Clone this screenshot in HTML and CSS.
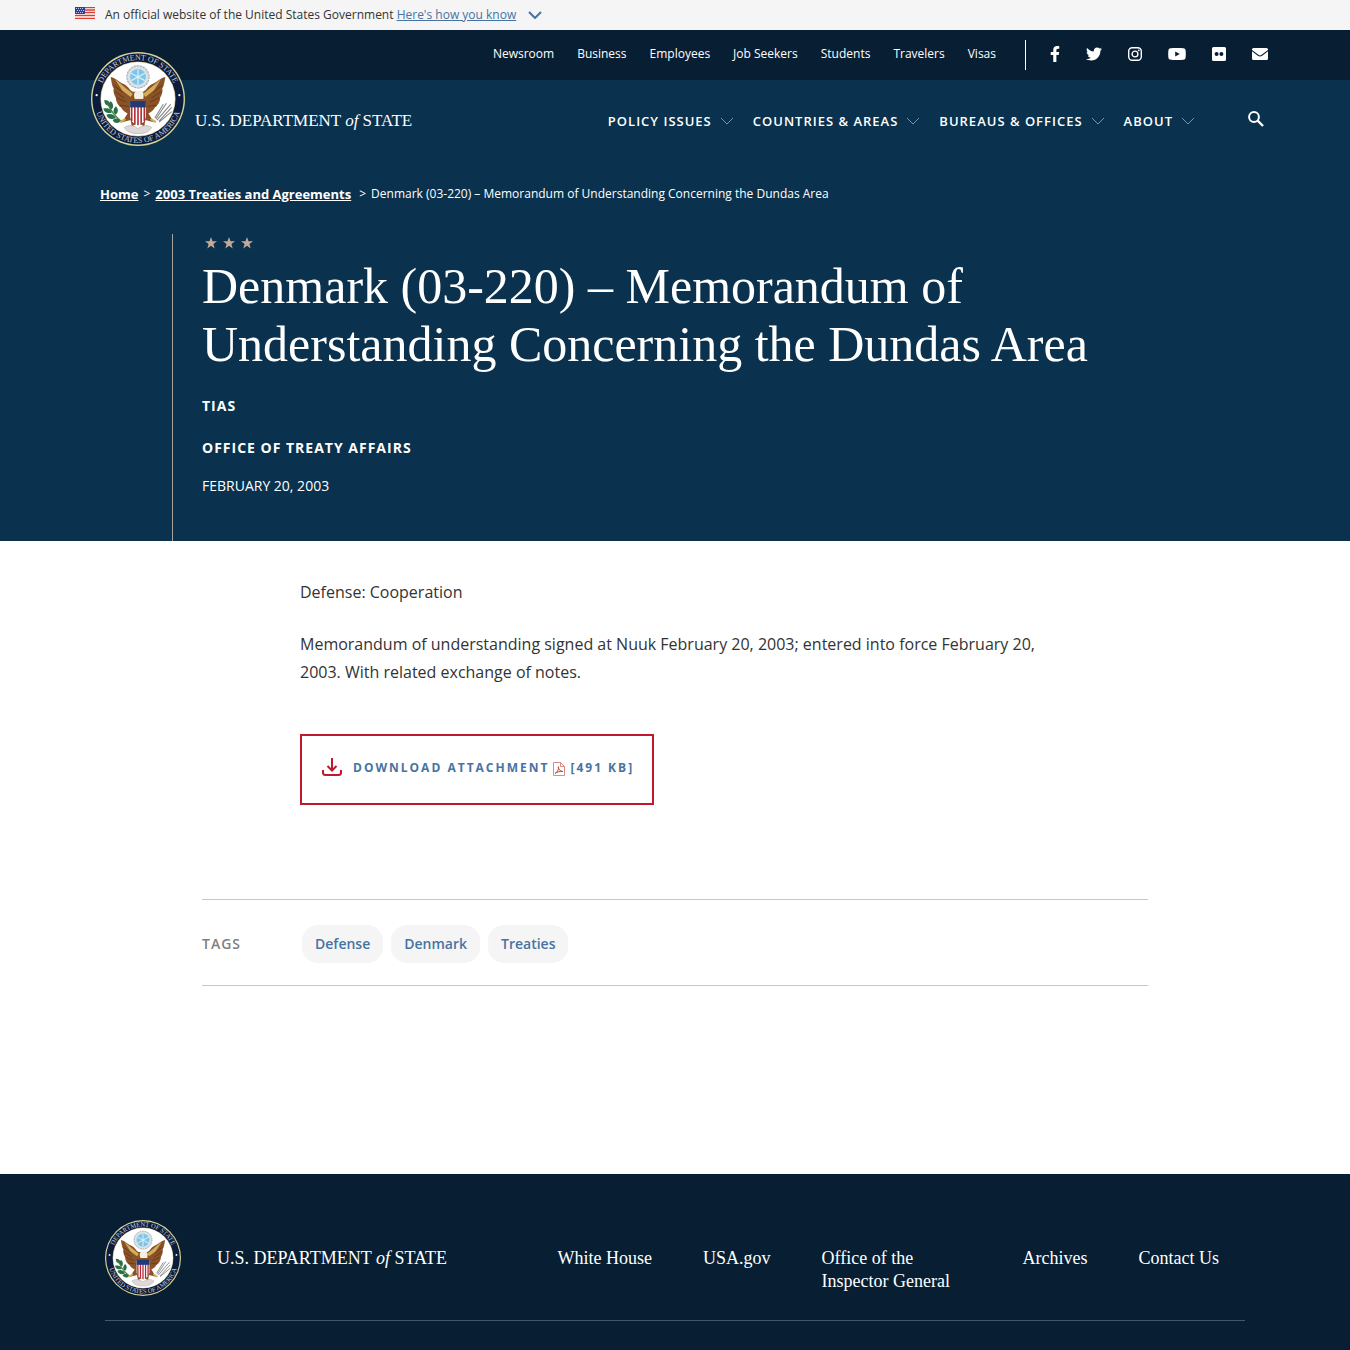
FILE: index.html
```html
<!DOCTYPE html>
<html lang="en">
<head>
<meta charset="utf-8">
<meta name="viewport" content="width=device-width, initial-scale=1">
<title>Denmark (03-220) – Memorandum of Understanding Concerning the Dundas Area</title>
<link rel="stylesheet" href="styles.css">
</head>
<body>
<svg class="defs" width="0" height="0" aria-hidden="true">
  <defs>
    <path id="arc-top" d="M8.900 55A41.400 41.400 0 1 1 91.100 55"/>
    <path id="arc-bottom" d="M3.500 47A46.600 46.600 0 1 0 96.500 47"/>
    <symbol id="chevron" viewBox="0 0 14 8"><path d="M1 1l6 6 6-6" fill="none" stroke="currentColor"/></symbol>
    <symbol id="star" viewBox="0 0 12 12"><path d="M6 0l1.500 4.200H12L8.400 6.900 9.700 11.500 6 8.800 2.300 11.500 3.600 6.900 0 4.200h4.500z" fill="currentColor"/></symbol>
    <symbol id="seal" viewBox="0 0 100 100">
      <circle cx="50" cy="50" r="50" fill="#d9d39a"/>
      <circle cx="50" cy="50" r="48.500" fill="#0c1c3c"/>
      <circle cx="50" cy="50" r="40" fill="#b9a869"/>
      <circle cx="50" cy="50" r="39.400" fill="#fff"/>
      <g fill="#c9cbd6" font-family="Liberation Serif, serif" font-size="8.500">
        <text text-anchor="middle"><textPath href="#arc-top" startOffset="50%">DEPARTMENT OF STATE</textPath></text>
        <text text-anchor="middle"><textPath href="#arc-bottom" startOffset="50%">UNITED STATES OF AMERICA</textPath></text>
      </g>
      <circle cx="6" cy="46" r="1.200" fill="#fff"/><circle cx="94" cy="46" r="1.200" fill="#fff"/>
      <g transform="translate(-6 -6) scale(1.120)">
        <g fill="#8a5227">
          <path d="M45 43c-3-1-4-5-8-7-5-2-8-6-13-7 1 5 1 8 3 11-1 3 1 7 2 9 0 4 3 8 5 9 2 4 6 6 9 6l2 4h10l2-4c3 0 7-2 9-6 2-1 5-5 5-9 1-2 3-6 2-9 2-3 2-6 3-11-5 1-8 5-13 7-4 2-5 6-8 7z"/>
          <path d="M41 62l-6 10 8-2 1 6 6-3 6 3 1-6 8 2-6-10z"/>
        </g>
        <g fill="none" stroke="#5f3318" stroke-width=".8">
          <path d="M27 37l9 7M28 43l9 6M30 49l9 4M33 56l8 1M73 37l-9 7M72 43l-9 6M70 49l-9 4M67 56l-8 1"/>
        </g>
        <path d="M28 31l12 10 5 4-2 3-8-6zM72 31L60 41l-5 4 2 3 8-6z" fill="#d3ad5c"/>
        <path d="M47 50c-2-5 0-9 5-8 3 0 4 3 3 8z" fill="#f4efe2"/>
        <circle cx="50" cy="29" r="11" fill="#d9e2e5"/>
        <circle cx="50" cy="29" r="10.500" fill="none" stroke="#a5afaa" stroke-dasharray="2 1"/>
        <circle cx="50" cy="29" r="7.500" fill="#7fc4e8"/>
        <path d="M50 22v14M43.500 25.500l13 7M43.500 32.500l13-7" stroke="#d6f0fa" stroke-width="1.200"/>
        <path d="M42.500 53h15v14q-1 6-7.500 8-6.500-2-7.500-8z" fill="#fff"/>
        <path d="M44 57v14M47 57v17M50 57v18M53 57v17M56 57v14" stroke="#b32836" stroke-width="1.500"/>
        <path d="M42.500 52h15v6h-15z" fill="#203a79"/>
        <g fill="#27704a">
          <path d="M18 51c5 0 6 3 5 6-4-1-5-3-5-6zM24 52c3 3 3 6 1 8-3-2-3-5-1-8zM17 59c5-1 8 1 8 4-4 1-7 0-8-4zM20 65c4-2 8 0 9 3-4 2-8 1-9-3zM29 57c3 3 2 6 0 8-3-2-3-5 0-8zM26 70c4-3 7-1 8 1-3 3-7 2-8-1z"/>
          <path d="M21 54q4 10 14 18" fill="none" stroke="#4e7a3d" stroke-width="1.200"/>
        </g>
        <path d="M67 69l10-15M68 70l13-15M70 71l12-13M66 68l8-13M70 72l12-10" stroke="#898b8c" stroke-width="1.100"/>
        <path d="M33 72l5-3M67 72l-5-3" stroke="#d3ad5c" stroke-width="2"/>
        <path d="M37 77q6-4 13 1 7-5 13-1-3 6-13 6t-13-6z" fill="#ded8d8" stroke="#b5acae" stroke-width=".6"/>
      </g>
    </symbol>
  </defs>
</svg>

<div class="banner">
  <div class="banner-inner">
    <svg class="flag" viewBox="0 0 20 12" aria-hidden="true">
      <path fill="#fff" d="M0 0h20v12H0z"/>
      <path d="M0 .500h20M0 3h20M0 5.500h20M0 8.500h20M0 11.300h20" stroke="#dc3d30" stroke-width="1.300"/>
      <path fill="#2e3f9c" d="M0 0h10v7H0z"/>
      <path d="M1 1.500h8M2 3.500h8M1 5.500h8" stroke="#b8c4ee" stroke-dasharray="1 1"/>
    </svg>
    <span class="banner-text">An official website of the United States Government <a href="#">Here's how you know</a></span>
    <svg class="banner-chevron" aria-hidden="true"><use href="#chevron"/></svg>
  </div>
</div>

<header class="header">
  <a class="brand" href="#">
    <svg class="seal" role="img" aria-label="Department of State seal"><use href="#seal"/></svg>
    <span class="wordmark">U.S. DEPARTMENT <em>of</em> STATE</span>
  </a>
  <div class="menus">
    <div class="utility">
      <nav class="utility-links" aria-label="Audiences">
        <a href="#">Newsroom</a><a href="#">Business</a><a href="#">Employees</a><a href="#">Job Seekers</a><a href="#">Students</a><a href="#">Travelers</a><a href="#">Visas</a>
      </nav>
      <div class="social">
        <a href="#" aria-label="Facebook"><svg width="10" height="16" viewBox="0 0 320 512"><path d="M279 288l14-93h-89v-60c0-25 13-50 53-50h40V7s-37-7-72-7c-73 0-121 44-121 125v70H23v93h81v224h100V288z"/></svg></a>
        <a href="#" aria-label="Twitter"><svg width="16" height="16" viewBox="0 0 512 512"><path d="M459 152c1 4 1 9 1 13 0 139-106 299-299 299-59 0-115-17-161-47 8 1 16 1 25 1 49 0 94-16 130-45-46-1-84-31-98-73 7 1 13 2 20 2 9 0 19-1 28-4-48-10-84-52-84-103v-1c14 8 30 13 47 13-28-19-47-51-47-87 0-19 5-37 14-53 52 64 130 106 217 110-2-8-3-16-3-24 0-58 47-105 105-105 30 0 58 13 77 33 24-5 46-13 66-25-8 24-24 45-46 58 21-2 42-8 60-16-14 21-32 39-52 54z"/></svg></a>
        <a href="#" aria-label="Instagram"><svg width="14" height="14" viewBox="0 0 14 14"><rect x=".7" y=".7" width="12.600" height="12.600" rx="3.500" fill="none" stroke="#fff" stroke-width="1.400"/><circle cx="7" cy="7" r="2.900" fill="none" stroke="#fff" stroke-width="1.400"/><circle cx="10.800" cy="3.300" r=".9"/></svg></a>
        <a href="#" aria-label="YouTube"><svg width="18" height="12" viewBox="0 0 18 12"><path fill-rule="evenodd" d="M9 0c7 0 8 .1 8.500 2 .4 2 .4 6 0 8-.5 1.900-1.500 2-8.500 2S1 11.900.500 10C.1 8 .1 4 .500 2 1 .1 2 0 9 0zM7.200 3.400v5.200L11.800 6z"/></svg></a>
        <a href="#" aria-label="Flickr"><svg width="14" height="14" viewBox="0 0 14 14"><path fill-rule="evenodd" d="M1.500 0h11A1.500 1.500 0 0 1 14 1.500v11a1.500 1.500 0 0 1-1.500 1.500h-11A1.500 1.500 0 0 1 0 12.500v-11A1.500 1.500 0 0 1 1.500 0zM2.600 7a2 2 0 1 0 4 0 2 2 0 1 0-4 0M7.400 7a2 2 0 1 0 4 0 2 2 0 1 0-4 0"/></svg></a>
        <a href="#" aria-label="Email"><svg width="16" height="12" viewBox="0 0 16 12"><path d="M1.500 0h13Q16 0 16 1.500v.4L9.600 6.800Q8 8 6.400 6.800L0 1.900v-.4Q0 0 1.500 0zM0 3.300l5.800 4.500q2.200 1.600 4.400 0L16 3.300v7.200q0 1.500-1.500 1.500h-13Q0 12 0 10.500z"/></svg></a>
      </div>
    </div>
    <nav class="primary" aria-label="Main">
      <button type="button">POLICY ISSUES<svg class="chevron" aria-hidden="true"><use href="#chevron"/></svg></button>
      <button type="button">COUNTRIES &amp; AREAS<svg class="chevron" aria-hidden="true"><use href="#chevron"/></svg></button>
      <button type="button">BUREAUS &amp; OFFICES<svg class="chevron" aria-hidden="true"><use href="#chevron"/></svg></button>
      <button type="button">ABOUT<svg class="chevron" aria-hidden="true"><use href="#chevron"/></svg></button>
      <button type="button" class="search" aria-label="Search"><svg width="16" height="16" viewBox="0 0 16 16"><circle cx="6" cy="6" r="4.900" fill="none" stroke="#fff" stroke-width="2"/><path d="M9.500 9.500l5.500 5.500" stroke="#fff" stroke-width="2.400"/></svg></button>
    </nav>
  </div>
</header>

<main>
  <section class="hero">
    <nav class="breadcrumbs" aria-label="Breadcrumb">
      <a href="#">Home</a><span>&gt;</span><a href="#">2003 Treaties and Agreements</a><span class="last-separator">&gt;</span><span>Denmark (03-220) – Memorandum of Understanding Concerning the Dundas Area</span>
    </nav>
    <div class="hero-body">
      <div class="stars" aria-hidden="true"><svg><use href="#star"/></svg><svg><use href="#star"/></svg><svg><use href="#star"/></svg></div>
      <h1>Denmark (03-220) – Memorandum of Understanding Concerning the Dundas Area</h1>
      <p class="kind">TIAS</p>
      <p class="office">OFFICE OF TREATY AFFAIRS</p>
      <p class="date">FEBRUARY 20, 2003</p>
    </div>
  </section>

  <article class="article">
    <p>Defense: Cooperation</p>
    <p>Memorandum of understanding signed at Nuuk February 20, 2003; entered into force February 20, 2003. With related exchange of notes.</p>
    <a class="download" href="#">
      <svg class="download-icon" viewBox="0 0 20 18" aria-hidden="true"><path d="M10 0v12M5.500 8l4.500 4.500L14.500 8M1 12v2.500Q1 17 3.500 17h13q2.500 0 2.500-2.500V12" fill="none" stroke="#c1182e" stroke-width="2"/></svg>
      <span>DOWNLOAD ATTACHMENT</span>
      <svg class="pdf-icon" viewBox="0 0 12 14" aria-hidden="true"><path d="M.5.5h7l4 4v9H.500zM7.500.500v4h4" fill="#fff" stroke="#d98b85"/><path d="M2 11.500c2-1 4-4 3.500-7M5.200 5c.5 2.500 2 4.500 4.800 4.500-3-.5-6 .5-8 2" fill="none" stroke="#b5483f"/></svg>
      <span>[491 KB]</span>
    </a>
  </article>

  <section class="tags">
    <h2>TAGS</h2>
    <div class="tag-list"><a href="#">Defense</a><a href="#">Denmark</a><a href="#">Treaties</a></div>
  </section>
</main>

<footer class="footer">
  <div class="footer-inner">
    <a class="footer-brand" href="#">
      <svg class="seal" role="img" aria-label="Department of State seal"><use href="#seal"/></svg>
      <span class="wordmark">U.S. DEPARTMENT <em>of</em> STATE</span>
    </a>
    <nav class="footer-links" aria-label="Footer">
      <a href="#">White House</a><a href="#">USA.gov</a><a class="wide" href="#">Office of the Inspector General</a><a href="#">Archives</a><a href="#">Contact Us</a>
    </nav>
  </div>
</footer>
</body>
</html>
```

FILE: styles.css
```css
* { box-sizing: border-box; }
body { margin: 0; background: #fff; color: #333; font: 16px/28px "Open Sans", sans-serif; }
p, h1, h2 { margin: 0; }
a { color: inherit; text-decoration: none; }
svg { display: block; flex: none; }
.defs { position: absolute; }

.banner { background: #f5f5f5; }
.banner-inner { max-width: 1200px; height: 30px; margin: 0 auto; display: flex; align-items: center; font-size: 12px; line-height: 16px; }
.flag { width: 20px; height: 12px; margin: 0 10px 4px 0; }
.banner-text a { color: #4773a3; text-decoration: underline; }
.banner-chevron { width: 14px; height: 8px; margin-left: 12px; color: #4773a3; stroke-width: 2; }

.header { display: flex; justify-content: space-between; align-items: flex-start; padding: 0 82px 0 91px; background: linear-gradient(#081f33 50px, #0a314d 50px); color: #fff; }
.brand { display: flex; align-items: flex-end; gap: 10px; padding-top: 22px; }
.brand .seal { width: 94px; height: 94px; }
.wordmark { font: 500 18px/24px "Liberation Serif", serif; white-space: nowrap; }
.brand .wordmark { margin-bottom: 13px; font-size: 17px; }
.utility { display: flex; justify-content: flex-end; align-items: center; height: 50px; }
.utility-links { display: flex; gap: 23px; font-size: 12px; padding-right: 29px; border-right: 1px solid #fff; }
.utility-links a { height: 30px; line-height: 28px; white-space: nowrap; }
.social { display: flex; align-items: center; gap: 26px; padding-left: 24px; height: 48px; margin-bottom: 2px; }
.social svg { fill: #fff; }
.primary { display: flex; justify-content: flex-end; gap: 19px; height: 80px; padding: 0 4px; }
.primary button { display: flex; align-items: center; gap: 8px; height: 82px; padding: 0; border: 0; background: none; color: #fff; font: 600 13px/20px "Open Sans", sans-serif; letter-spacing: 1px; white-space: nowrap; }
.chevron { width: 14px; height: 8px; color: #7593ac; }
.primary .search { margin-left: 34px; height: 78px; }

.hero { background: #0a314d; color: #fff; padding-top: 24px; }
.breadcrumbs { display: flex; gap: 5px; margin: 0 100px 30px; font-size: 12px; line-height: 20px; }
.breadcrumbs a { font-size: 13px; font-weight: 700; text-decoration: underline; }
.last-separator { padding-left: 3px; }
.hero-body { margin: 0 172px; padding: 3px 0 45px 29px; border-left: 1px solid #a9a39d; }
.stars { display: flex; gap: 6px; padding-left: 3px; height: 20px; color: #c9a995; }
.stars svg { width: 12px; height: 12px; }
h1 { font: 400 50px/58px "Liberation Serif", serif; }
.kind, .office { font-size: 14px; line-height: 20px; font-weight: 700; letter-spacing: 1px; }
.kind { margin-top: 23px; }
.office { margin-top: 22px; }
.date { margin-top: 18px; font-size: 14px; line-height: 20px; }

.article { max-width: 750px; margin: 0 auto; padding: 37px 0 94px; }
.article p { margin-bottom: 24px; }
.download { display: inline-flex; align-items: flex-start; margin-top: 24px; padding: 22px 18px 25px 20px; border: 2px solid #c1182e; color: #4773a3; font-size: 12px; line-height: 20px; font-weight: 700; letter-spacing: 2px; }
.download-icon { width: 20px; height: 18px; margin-right: 11px; }
.pdf-icon { width: 12px; height: 14px; margin: 4px 5px 0 4px; }

.tags { display: flex; align-items: center; margin: 0 202px 188px; padding: 25px 0 22px; border: solid #c4c8cc; border-width: 1px 0; }
.tags h2 { width: 100px; font-size: 14px; line-height: 20px; font-weight: 600; color: #808080; letter-spacing: 1px; }
.tag-list { display: flex; gap: 8px; }
.tag-list a { padding: 9px 13px; border-radius: 16px; background: #f5f5f5; color: #4773a3; font-size: 14px; line-height: 20px; font-weight: 600; }

.footer { background: #081f33; color: #fff; padding: 46px 20px 80px; }
.footer-inner { display: flex; justify-content: space-between; max-width: 1140px; margin: 0 auto; padding: 0 26px 24px 0; border-bottom: 1px solid #45566a; }
.footer-brand { display: flex; align-items: center; gap: 36px; }
.footer-brand .seal { width: 76px; height: 76px; }
.footer-links { display: flex; gap: 51px; padding-top: 27px; font: 18px/23px "Liberation Serif", serif; }
.footer-links .wide { width: 150px; }
```
